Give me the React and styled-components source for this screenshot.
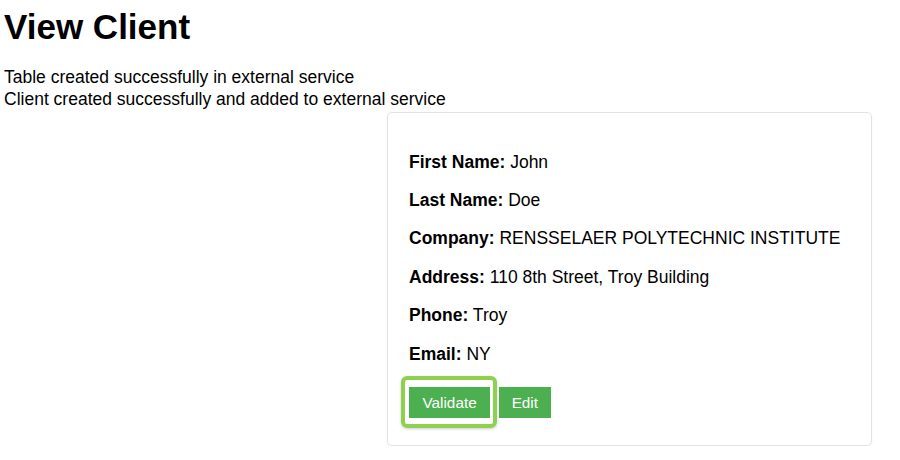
import React from 'react';
import styled, { createGlobalStyle } from 'styled-components';

const GlobalStyle = createGlobalStyle`
  html, body {
    margin: 0;
    padding: 0;
    background: #fff;
  }
  body {
    font-family: "Liberation Sans", Arial, sans-serif;
    color: #000;
  }
`;

const Page = styled.div`
  padding: 4px 4px 0;
`;

const Title = styled.h1`
  font-size: 35px;
  line-height: 40px;
  font-weight: bold;
  margin: 3px 0 19px;
`;

const Messages = styled.div`
  font-size: 17.5px;
  line-height: 22px;
`;

const Card = styled.div`
  width: 441px;
  margin: 2px 0 0 383px;
  padding: 20px 21px 27px;
  border: 1px solid #e2e2e2;
  border-radius: 5px;
  box-shadow: 0 1px 3px rgba(0, 0, 0, 0.05);
`;

const Field = styled.p`
  font-size: 17.5px;
  line-height: 22.4px;
  margin: 16px 0;

  &:first-child {
    margin-top: 17.5px;
  }
`;

const Label = styled.strong`
  font-weight: bold;
`;

const Actions = styled.div`
  display: flex;
  gap: 9px;
  margin-top: 22px;
`;

const ActionButton = styled.button`
  position: relative;
  font-family: "Liberation Sans", Arial, sans-serif;
  font-size: 15.3px;
  line-height: 17px;
  color: #fff;
  background-color: #4caf50;
  border: none;
  padding: 7px ${({ $wide }) => ($wide ? '13.5px' : '12.5px')};
  cursor: pointer;

  ${({ $highlighted }) =>
    $highlighted &&
    `
    &::after {
      content: '';
      position: absolute;
      left: -8px;
      right: -7px;
      top: -11px;
      bottom: -10px;
      border: 4px solid #8fd14f;
      border-radius: 6px;
      box-shadow: 0 1px 3px rgba(0, 0, 0, 0.2);
      pointer-events: none;
    }
  `}
`;

const client = [
  { label: 'First Name', value: 'John' },
  { label: 'Last Name', value: 'Doe' },
  { label: 'Company', value: 'RENSSELAER POLYTECHNIC INSTITUTE' },
  { label: 'Address', value: '110 8th Street, Troy Building' },
  { label: 'Phone', value: 'Troy' },
  { label: 'Email', value: 'NY' },
];

const App = () => {
  return (
    <Page>
      <GlobalStyle />
      <Title>View Client</Title>
      <Messages>
        <div>Table created successfully in external service</div>
        <div>Client created successfully and added to external service</div>
      </Messages>

      <Card>
        {client.map((field) => (
          <Field key={field.label}>
            <Label>{field.label}:</Label> {field.value}
          </Field>
        ))}
        <Actions>
          <ActionButton $wide $highlighted>Validate</ActionButton>
          <ActionButton>Edit</ActionButton>
        </Actions>
      </Card>
    </Page>
  );
};

export default App;
